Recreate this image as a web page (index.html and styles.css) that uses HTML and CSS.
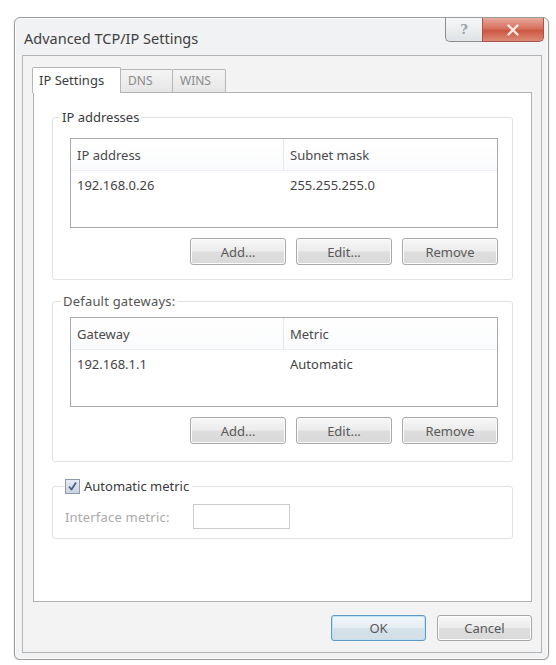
FILE: index.html
```html
<!DOCTYPE html>
<html>
<head>
<meta charset="utf-8">
<title>Advanced TCP/IP Settings</title>
<link rel="stylesheet" href="styles.css">
</head>
<body>
<div class="page">
  <div class="window">
    <div class="titlebar">
      <div class="title">Advanced TCP/IP Settings</div>
      <div class="caption-buttons">
        <div class="cap help">?</div>
        <div class="cap close">
          <svg width="14" height="12" viewBox="0 0 14 12"><path d="M2.5 1.5 L11.5 10.5 M11.5 1.5 L2.5 10.5" stroke="#fbe9e6" stroke-width="2.4" stroke-linecap="round"/></svg>
        </div>
      </div>
    </div>
    <div class="client">
      <div class="tabs">
        <div class="tab active">IP Settings</div>
        <div class="tab">DNS</div>
        <div class="tab">WINS</div>
      </div>
      <div class="panel">
        <fieldset class="group ip-group">
          <legend>IP addresses</legend>
          <div class="list">
            <div class="list-head">
              <div class="col c1">IP address</div>
              <div class="col c2">Subnet mask</div>
            </div>
            <div class="list-row">
              <div class="col c1">192.168.0.26</div>
              <div class="col c2">255.255.255.0</div>
            </div>
          </div>
          <div class="btn-row">
            <button class="btn">Add...</button>
            <button class="btn">Edit...</button>
            <button class="btn">Remove</button>
          </div>
        </fieldset>
        <fieldset class="group gw-group">
          <legend>Default gateways:</legend>
          <div class="list">
            <div class="list-head">
              <div class="col c1">Gateway</div>
              <div class="col c2">Metric</div>
            </div>
            <div class="list-row">
              <div class="col c1">192.168.1.1</div>
              <div class="col c2">Automatic</div>
            </div>
          </div>
          <div class="btn-row">
            <button class="btn">Add...</button>
            <button class="btn">Edit...</button>
            <button class="btn">Remove</button>
          </div>
        </fieldset>
        <fieldset class="group metric-group">
          <legend class="check-legend">
            <span class="checkbox">
              <svg width="11" height="11" viewBox="0 0 11 11"><path d="M2 5.5 L4.5 8.5 L9 1.5" fill="none" stroke="#4a5f86" stroke-width="1.8" stroke-linejoin="round"/></svg>
            </span>
            <span>Automatic metric</span>
          </legend>
          <div class="metric-row">
            <span class="disabled">Interface metric:</span>
            <span class="textbox"></span>
          </div>
        </fieldset>
      </div>
      <div class="footer">
        <button class="btn ok">OK</button>
        <button class="btn">Cancel</button>
      </div>
    </div>
  </div>
</div>
</body>
</html>
```
FILE: styles.css
```css
html, body {
  margin: 0;
  padding: 0;
  background: #ffffff;
}

body {
  font-family: "Noto Sans", "Open Sans", "DejaVu Sans", sans-serif;
  font-size: 13px;
  line-height: 18px;
  color: #444444;
}

.page {
  padding: 17px 0 0 14px;
}

.window {
  width: 535px;
  height: 643px;
  box-sizing: border-box;
  border: 1px solid #9c9c9c;
  border-radius: 6px;
  background: #f1f2f3;
  box-shadow: inset 0 0 0 1px #fbfbfb, 0 1px 2px rgba(0, 0, 0, 0.18);
  display: flex;
  flex-direction: column;
}

.titlebar {
  height: 37px;
  flex: none;
  display: flex;
  align-items: flex-start;
}

.title {
  padding: 11px 0 0 9px;
  font-size: 14.5px;
  color: #404040;
}

.caption-buttons {
  margin-left: auto;
  margin-right: 4px;
  display: flex;
}

.cap {
  height: 24px;
  box-sizing: border-box;
  display: flex;
  align-items: center;
  justify-content: center;
  border: 1px solid #8e8e8e;
  border-top: none;
}

.help {
  width: 37px;
  border-radius: 0 0 0 5px;
  border-right: none;
  background: linear-gradient(#f6f7f8, #dfe2e6);
  color: #9aa0a8;
  font-family: "DejaVu Serif", serif;
  font-weight: bold;
  font-size: 13px;
}

.close {
  width: 62px;
  border-radius: 0 0 5px 0;
  border-color: #a5564b;
  background: linear-gradient(#e8a99d, #d8705e 45%, #cc5843 55%, #dc8a76);
}

.client {
  flex: 1;
  margin: 0 6px 6px 7px;
  border: 1px solid #b4b4b4;
  background: #f3f3f3;
  padding: 11px 9px 0 10px;
  display: flex;
  flex-direction: column;
}

.tabs {
  display: flex;
  align-items: flex-end;
  height: 25px;
  flex: none;
}

.tab {
  height: 23px;
  box-sizing: border-box;
  border: 1px solid #b6b6b6;
  border-bottom: none;
  margin-left: -1px;
  padding: 2px 7px 0 7px;
  background: linear-gradient(#f4f4f4, #e6e6e6);
  color: #8a8a8a;
  font-size: 12px;
  border-radius: 2px 2px 0 0;
}

.tab:nth-child(2) {
  width: 53px;
}

.tab:nth-child(3) {
  width: 54px;
}

.tab.active {
  width: 89px;
  height: 26px;
  margin-left: -1px;
  margin-bottom: -1px;
  position: relative;
  z-index: 1;
  background: #ffffff;
  color: #3c3c3c;
  font-size: 13px;
  padding-top: 3px;
  padding-left: 6px;
}

.panel {
  height: 510px;
  box-sizing: border-box;
  border: 1px solid #b2b2b2;
  background: #ffffff;
  padding: 15px 18px 0 18px;
}

.group {
  margin: 0;
  border: 1px solid #e0e2e5;
  border-radius: 3px;
  padding: 12px 14px 14px 17px;
  min-width: 0;
}

.group legend {
  margin-left: -10px;
  padding: 0 2px;
  color: #3a3a3a;
}

.gw-group {
  margin-top: 12px;
  padding-top: 7px;
  padding-bottom: 17px;
}

.gw-group legend {
  margin-left: -9px;
  color: #555;
  letter-spacing: 0.2px;
}

.list {
  height: 90px;
  box-sizing: border-box;
  border: 1px solid #a7a9ac;
  background: #ffffff;
}

.list-head {
  height: 31px;
  display: flex;
  align-items: center;
  border-bottom: 1px solid #eceef1;
  background: linear-gradient(#ffffff, #fafbfc);
  color: #4a4a4a;
}

.list-head .c1 {
  border-right: 1px solid #e6e8eb;
}

.list-row {
  height: 27px;
  display: flex;
  align-items: center;
  color: #444;
}

.col {
  box-sizing: border-box;
  padding-left: 6px;
}

.c1 {
  width: 213px;
  align-self: stretch;
  display: flex;
  align-items: center;
}

.c2 {
  flex: 1;
}

.btn-row {
  display: flex;
  justify-content: flex-end;
  gap: 10px;
  margin-top: 10px;
}

.btn {
  width: 96px;
  height: 27px;
  box-sizing: border-box;
  border: 1px solid #a9a9a9;
  border-radius: 3px;
  background: linear-gradient(#f7f7f7, #ececec 48%, #dedede 52%, #d9d9d9);
  box-shadow: inset 0 0 0 1px #fbfbfb;
  font-family: inherit;
  font-size: 13px;
  color: #5a5a5a;
  padding: 0;
}

.metric-group {
  margin-top: 15px;
  padding: 9px 14px 9px 12px;
}

.check-legend {
  margin-left: 0 !important;
  display: flex;
  align-items: center;
  gap: 4px;
  padding: 0 3px 0 0 !important;
}

.checkbox {
  width: 15px;
  height: 15px;
  box-sizing: border-box;
  border: 1px solid #8f9aaa;
  background: linear-gradient(#e6ebf3, #c9d3e2);
  display: flex;
  align-items: center;
  justify-content: center;
}

.metric-row {
  display: flex;
  align-items: center;
}

.disabled {
  width: 128px;
  color: #a9a9a9;
  letter-spacing: 0.2px;
}

.textbox {
  width: 97px;
  height: 25px;
  box-sizing: border-box;
  border: 1px solid #c9cbce;
  background: #ffffff;
}

.footer {
  flex: 1;
  display: flex;
  justify-content: flex-end;
  align-items: flex-start;
  gap: 11px;
  padding-top: 13px;
}

.footer .btn {
  width: 95px;
  height: 26px;
}

.footer .btn.ok {
  border-color: #5b9bc9;
  box-shadow: inset 0 0 0 1px #bfe0f5;
  background: linear-gradient(#f1f7fb, #e6eef3 48%, #d6e2ea 52%, #d2dde5);
}
```
